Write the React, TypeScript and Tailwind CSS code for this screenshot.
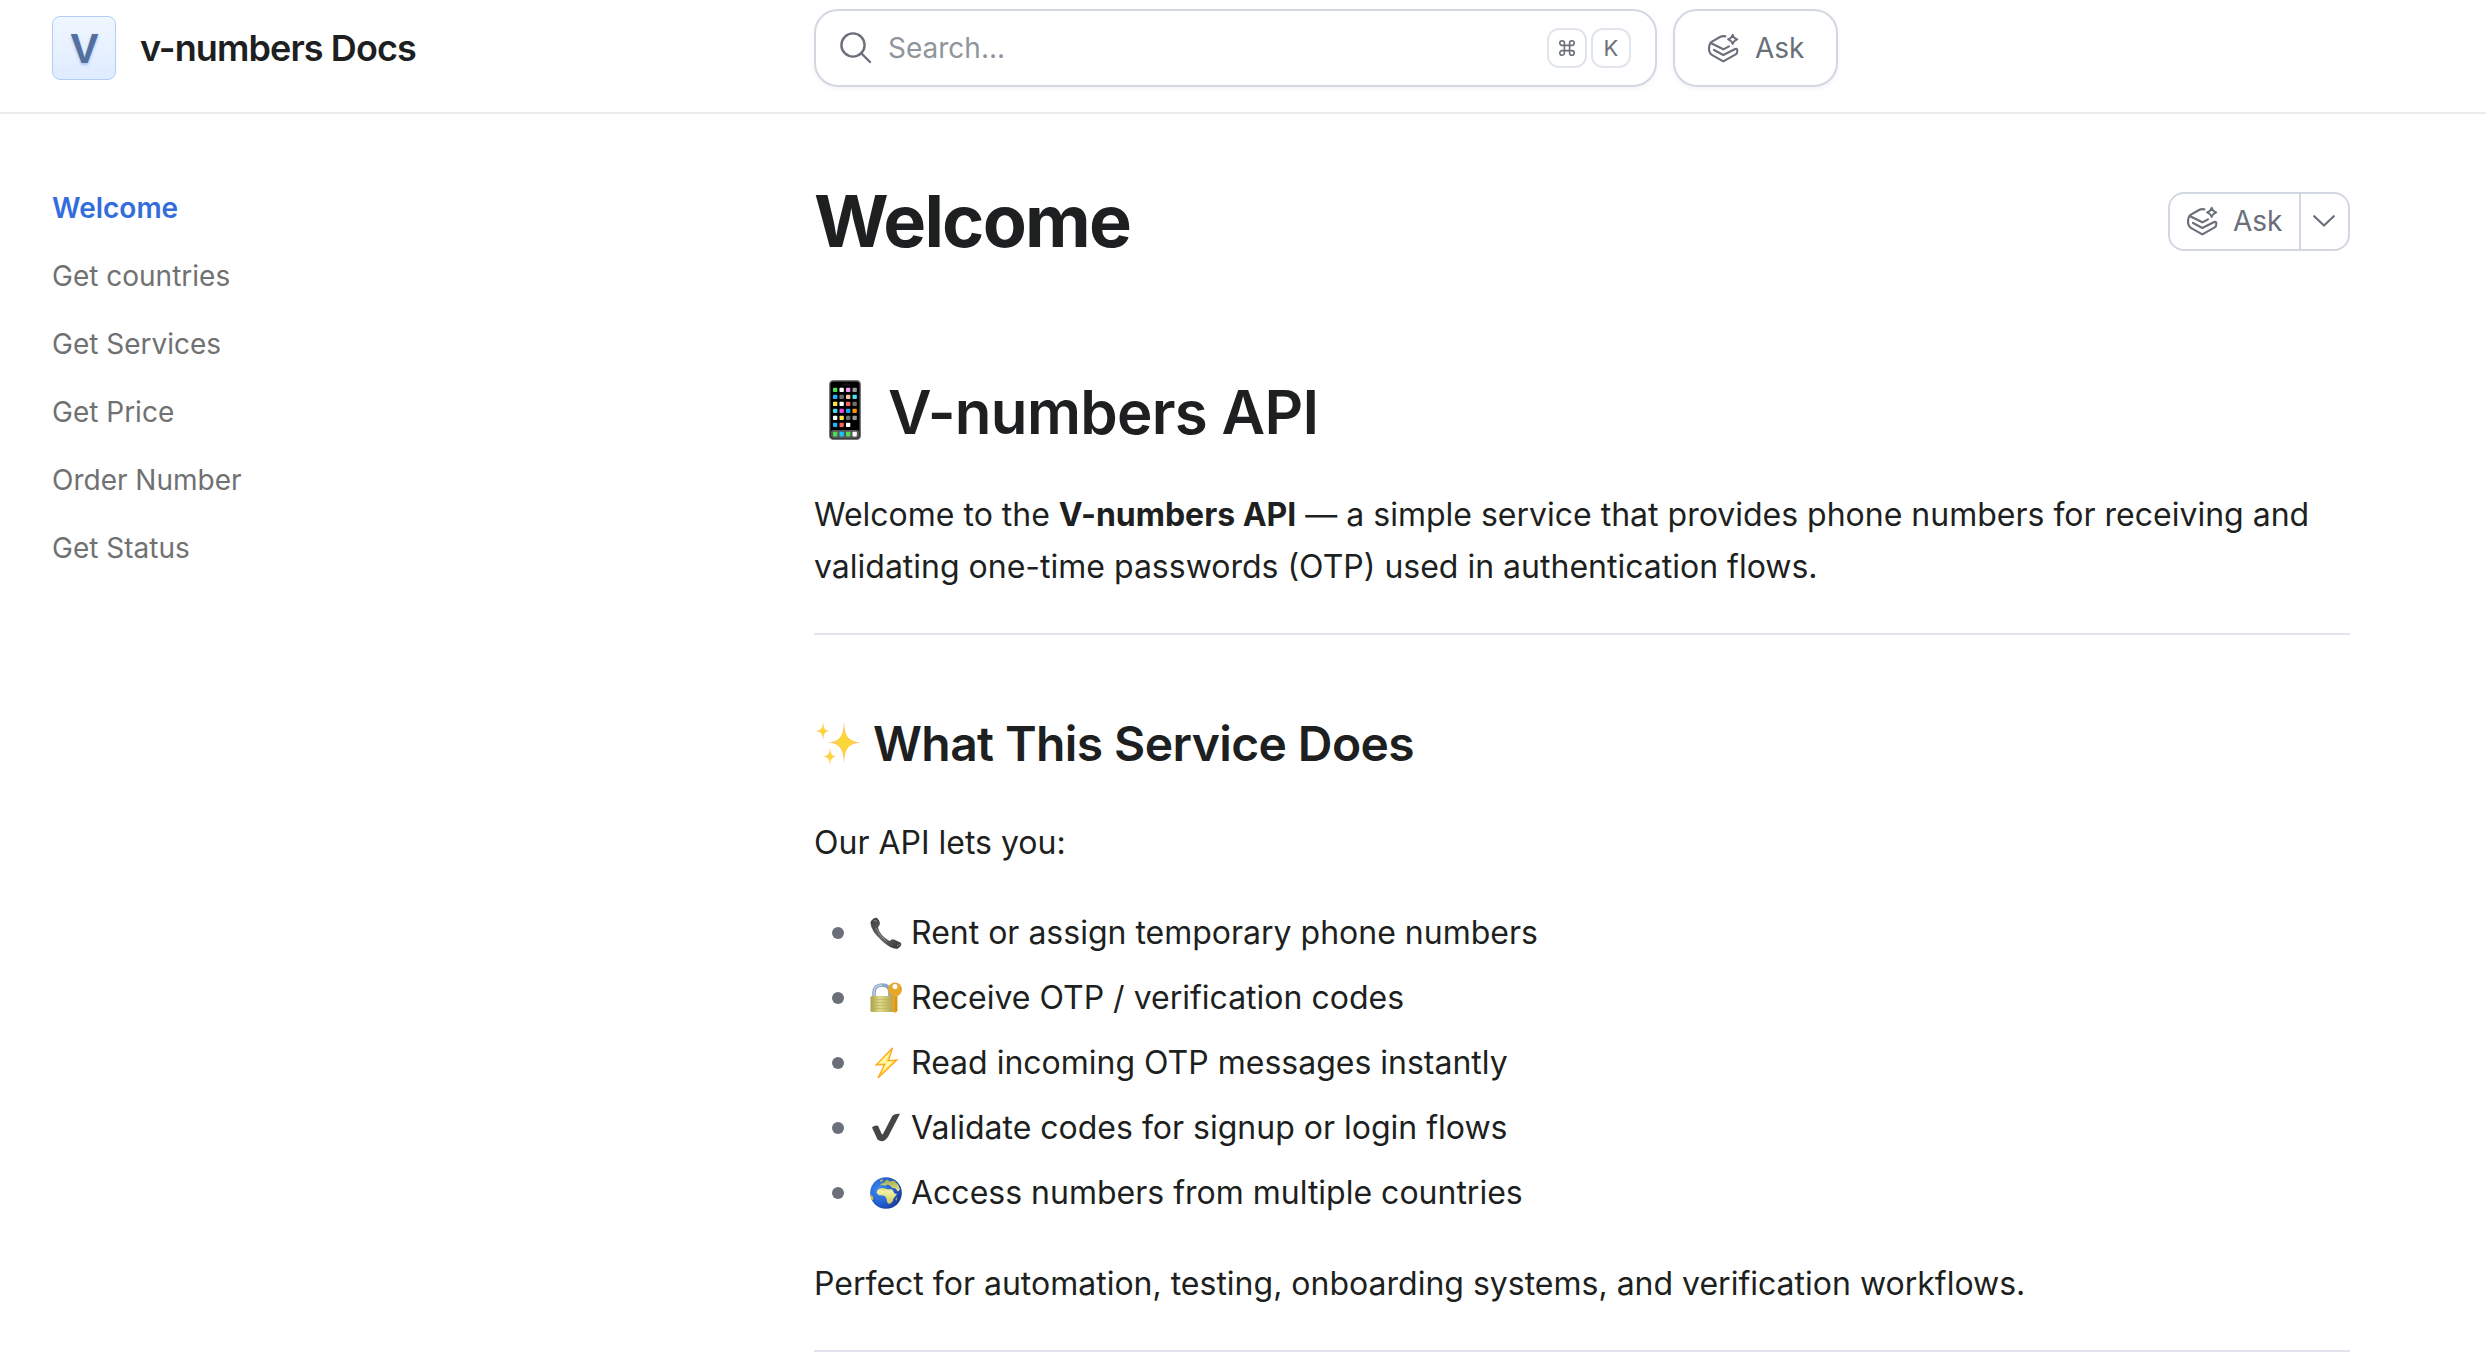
import type { ReactNode } from 'react'

const NAV_ITEMS = ['Welcome', 'Get countries', 'Get Services', 'Get Price', 'Order Number', 'Get Status']

type Feature = {
  icon: ReactNode
  text: string
}

function AskIcon() {
  return (
    <svg viewBox="0 0 90 84" className="w-[30px] h-7 shrink-0 overflow-visible" fill="none" stroke="currentColor" strokeWidth="6.5" strokeLinecap="round" strokeLinejoin="round">
      <path d="M52 7 Q43 5 36 9 L12 23 Q3 29 3 44 Q3 58 14 64 L46 82 L83 61 Q88 58 88 50 Q88 42 80 46 L46 63 L18 48" />
      <path d="M8 27 L46 46 L63 37" />
      <path d="M74 2 Q77 13 88 16 Q77 19 74 30 Q71 19 60 16 Q71 13 74 2Z" strokeWidth="5.5" />
    </svg>
  )
}

function SearchIcon() {
  return (
    <svg viewBox="0 0 32 32" className="w-8 h-8 shrink-0" fill="none" stroke="currentColor" strokeWidth="2.4" strokeLinecap="round">
      <circle cx="13" cy="13" r="11.6" />
      <path d="M21.5 21.5 L30 30" />
    </svg>
  )
}

function CommandIcon() {
  return (
    <svg viewBox="0 0 16 16" className="w-4 h-4" fill="none" stroke="currentColor" strokeWidth="1.6">
      <path d="M5.4 5.4H3.1A2.3 2.3 0 1 1 5.4 3.1V12.9A2.3 2.3 0 1 1 3.1 10.6H12.9A2.3 2.3 0 1 1 10.6 12.9V3.1A2.3 2.3 0 1 1 12.9 5.4Z" />
    </svg>
  )
}

const APP_COLORS = [
  ['#4be04f', '#ffffff', '#f09cf5', '#9a9a9a'],
  ['#1fb3ff', '#6e6e6e', '#f0caa0', '#4fdcf5'],
  ['#ffe94a', '#ffffff', '#ff6259', '#6e6e6e'],
  ['#43dfe5', '#e94de6', '#1fa6f5', '#ff9500'],
  ['#ffffff', '#ffe94a', '#6e6e6e', '#9a9a9a'],
  ['#1fb3ff', '#ff6259', '#ffffff'],
]

function PhoneEmoji() {
  return (
    <svg viewBox="0 0 32 60" className="w-8 h-[60px] shrink-0">
      <rect x=".7" y=".7" width="30.6" height="58.6" rx="3.6" fill="#000" stroke="#777" strokeWidth="1.4" />
      <rect x="13" y="3.5" width="8" height="2" rx="1" fill="#161616" />
      {APP_COLORS.map((row, r) =>
        row.map((color, c) => <rect key={`${r}-${c}`} x={4 + c * 6.5} y={7.7 + r * 7} width="4.3" height="4.4" rx=".8" fill={color} />)
      )}
      <rect x="2" y="50" width="28" height="8" rx="2" fill="#585858" />
      {['#4be04f', '#19c6ff', '#4be04f', '#ffffff'].map((color, c) => (
        <rect key={c} x={4 + c * 6.5} y="51.8" width="4.3" height="4.6" rx=".8" fill={color} />
      ))}
    </svg>
  )
}

function SparklesEmoji() {
  return (
    <svg viewBox="0 0 46 46" className="w-[46px] h-[46px] shrink-0">
      <defs>
        <radialGradient id="spark">
          <stop offset="0" stopColor="#f5da2c" />
          <stop offset=".45" stopColor="#ffd24a" />
          <stop offset="1" stopColor="#ffb577" />
        </radialGradient>
      </defs>
      <g fill="url(#spark)">
        <path d="M28 0 C28.800 14 31 20 45 21.500 C31 23 28.800 29 28 43 C27.200 29 25 23 12 21.500 C25 20 27.200 14 28 0Z" />
        <path d="M7 0 C7.500 7 8.500 9 13 10 C8.500 11 7.500 13 7 20 C6.500 13 5.500 11 0 10 C5.500 9 6.500 7 7 0Z" />
        <path d="M14 26 C14.500 32.500 15.500 34.500 20 35.500 C15.500 36.500 14.500 38.500 14 45 C13.500 38.500 12.500 36.500 7.500 35.500 C12.500 34.500 13.500 32.500 14 26Z" />
      </g>
    </svg>
  )
}

function ReceiverEmoji() {
  return (
    <svg viewBox="0 0 32 32" className="w-8 h-8">
      <defs>
        <linearGradient id="receiver" x1="0" y1="0" x2="1" y2="1">
          <stop offset="0" stopColor="#3c3d3f" />
          <stop offset=".5" stopColor="#66686a" />
          <stop offset="1" stopColor="#303133" />
        </linearGradient>
      </defs>
      <path d="M1 4 Q4 0 7 .8 Q11 5 9.500 8 L8 10.500 Q9.500 18 19.500 24 Q22 21.500 24 22.500 L30.500 25.500 Q33 28 28 31.500 Q22 33 12 24 Q1 14 .5 6Z" fill="url(#receiver)" />
      <path d="M3.500 4 Q6 2 7 5 M27 29 Q30 28 30 26.500 M6 11 Q9 19 17 25" fill="none" stroke="#8b8d8f" strokeWidth="1" />
    </svg>
  )
}

function LockEmoji() {
  return (
    <svg viewBox="0 0 32 32" className="w-8 h-8">
      <defs>
        <linearGradient id="lock">
          <stop offset="0" stopColor="#a8a045" />
          <stop offset=".35" stopColor="#e0d98c" />
          <stop offset="1" stopColor="#a3963b" />
        </linearGradient>
      </defs>
      <path d="M4 15 V11 Q4 3 12 3 Q20 3 20 11 V15" fill="none" stroke="#8ba5c5" strokeWidth="3.600" />
      <path d="M4 15 V11 Q4 3 12 3" fill="none" stroke="#c0d0e3" strokeWidth="1.400" />
      <rect x=".5" y="14" width="26.500" height="16" rx="1.500" fill="url(#lock)" />
      <path d="M1 17.500H27M1 20.500H27M1 23.500H27M1 26.500H27" stroke="#b8ae58" strokeWidth=".6" />
      <path d="M22.500 13 H27.500 V29 L25 31 L22.500 29 V26 L21 25 L22.500 23.500 L21 22 L22.500 20Z" fill="#e6a326" />
      <path d="M26 15V29" stroke="#bc7912" strokeWidth=".8" />
      <circle cx="25" cy="7.500" r="7" fill="#e6a82c" />
      <circle cx="25" cy="4.400" r="2.500" fill="#fff" />
    </svg>
  )
}

function BoltEmoji() {
  return (
    <svg viewBox="0 0 32 32" className="w-8 h-8">
      <path d="M22.500 .8 L6 18 L14.500 17.500 L8 31 L27 13 L18.500 13.500Z" fill="#ffe34d" stroke="#ffa51f" strokeWidth="1.200" />
      <path d="M20 5.500 L9 16.500 L17 15.800 L12 25 L23 14.500 L15.500 15Z" fill="#fffab8" />
    </svg>
  )
}

function CheckEmoji() {
  return (
    <svg viewBox="0 0 32 32" className="w-8 h-8">
      <path d="M2 15.500 Q4.500 12.800 8 13.800 L12 22.500 Q13 22.500 14 20 L22 4.500 Q24 1.200 30 1.800 L18 25 Q13 32 7.500 27.500Z" fill="#464646" />
    </svg>
  )
}

function GlobeEmoji() {
  return (
    <svg viewBox="0 0 32 32" className="w-8 h-8">
      <defs>
        <radialGradient id="ocean" cx=".3" cy=".4" r=".72">
          <stop offset="0" stopColor="#3f8cf0" />
          <stop offset=".6" stopColor="#2460d0" />
          <stop offset="1" stopColor="#1a3a96" />
        </radialGradient>
        <linearGradient id="land" x1="0" y1="0" x2="0" y2="32" gradientUnits="userSpaceOnUse">
          <stop offset="0" stopColor="#8fa04a" />
          <stop offset=".3" stopColor="#c9cc6a" />
          <stop offset=".45" stopColor="#f2f0a8" />
          <stop offset=".65" stopColor="#dfe07c" />
          <stop offset="1" stopColor="#cfa650" />
        </linearGradient>
      </defs>
      <circle cx="16" cy="16" r="15.800" fill="url(#ocean)" />
      <g fill="url(#land)">
        <path d="M7.500 13 Q9 10.800 13 11 L18 12.200 L22 12.200 L24.500 16.500 L27 17 L23.500 21.500 Q22.500 26 19 27 Q16.800 26 16.500 22 Q16 19 13 18.500 L8.500 18 L6.500 15.500Z" />
        <path d="M10 8.500 L11.500 6.500 L14 6 L15.500 3.500 L18 2.500 L19 4.500 L24 3.500 L28.500 8 L30 12.500 L28 14.500 L25.500 11.500 L22 10.800 L20 8.500 L17.500 7.500 L15 8.800 L12 8Z" />
        <path d="M10 3 L13 2 L13 4 L10 5Z" />
      </g>
      <path d="M1 18 Q4 19 3 23 L1.500 23 Q0 20 1 18Z" fill="#e4b33a" />
      <path d="M25.500 22 L27 20 L26.500 24Z" fill="#d9b450" />
    </svg>
  )
}

const FEATURES: Feature[] = [
  { icon: <ReceiverEmoji />, text: 'Rent or assign temporary phone numbers' },
  { icon: <LockEmoji />, text: 'Receive OTP / verification codes' },
  { icon: <BoltEmoji />, text: 'Read incoming OTP messages instantly' },
  { icon: <CheckEmoji />, text: 'Validate codes for signup or login flows' },
  { icon: <GlobeEmoji />, text: 'Access numbers from multiple countries' },
]

function Header() {
  return (
    <header className="flex h-[114px] border-b-2 border-[#ececec]">
      <div className="flex w-[814px] h-24 items-center pl-[52px]">
        <svg viewBox="0 0 64 64" className="w-16 h-16">
          <defs>
            <linearGradient id="logo" x1="0" y1="0" x2="0" y2="1">
              <stop offset="0" stopColor="#eff6ff" />
              <stop offset="1" stopColor="#dfecff" />
            </linearGradient>
          </defs>
          <rect x=".5" y=".5" width="63" height="63" rx="7.500" fill="url(#logo)" stroke="#b4cdf4" />
          <text x="32.500" y="47" textAnchor="middle" fontSize="42" className="font-['Liberation_Sans'] font-bold fill-[#546f9c] [text-shadow:0_2px_3px_#a9c4f5]">V</text>
        </svg>
        <span className="ml-6 text-[36px] leading-[48px] font-semibold tracking-[-0.9px]">v-numbers Docs</span>
      </div>
      <div className="flex gap-4 pt-[9px] text-[#6a6f79] text-[28px]">
        <div className="flex w-[843px] h-[78px] items-center rounded-[24px] border-2 border-[#d3d7e2] pl-6 pr-6 shadow-[0_2px_4px_#d3d7e244]">
          <SearchIcon />
          <span className="ml-4 grow text-[#90959c]">Search...</span>
          <div className="flex gap-1">
            <kbd className="flex w-10 h-10 items-center justify-center rounded-xl border-2 border-[#e1e5ec]"><CommandIcon /></kbd>
            <kbd className="flex w-10 h-10 items-center justify-center rounded-xl border-2 border-[#e1e5ec] font-[Inter] text-[22px]">K</kbd>
          </div>
        </div>
        <button className="flex w-[165px] h-[78px] items-center rounded-[24px] border-2 border-[#d3d7e2] pl-[33px] shadow-[0_2px_4px_#d3d7e244]">
          <AskIcon />
          <span className="ml-[17px]">Ask</span>
        </button>
      </div>
    </header>
  )
}

function Sidebar() {
  return (
    <nav className="w-[814px] shrink-0 pt-[60px] pl-[52px] text-[28px] leading-[68px] text-[#707172]">
      {NAV_ITEMS.map((item, i) => (
        <a key={item} className={i === 0 ? 'block font-semibold text-[#346ddb]' : 'block'}>{item}</a>
      ))}
    </nav>
  )
}

export default function App() {
  return (
    <div className="h-[1366px] w-[2486px] overflow-hidden bg-white font-[Inter,sans-serif] text-[#1d1f20]">
      <Header />
      <div className="flex">
        <Sidebar />
        <main className="w-[1536px] pt-[62px] text-[32px] leading-[52px]">
          <div className="flex h-[90px] items-center justify-between">
            <h1 className="text-[72px] leading-[90px] font-bold tracking-[-1.8px]">Welcome</h1>
            <div className="flex w-[182px] h-[59px] rounded-2xl border-2 border-[#d3d7e2] text-[28px] text-[#6a6f79]">
              <div className="flex w-[129px] items-center pl-[17px]">
                <AskIcon />
                <span className="ml-4">Ask</span>
              </div>
              <div className="flex grow items-center justify-center border-l-2 border-[#d3d7e2] pr-[2px]">
                <svg viewBox="0 0 22 12" className="w-[22px] h-3" fill="none" stroke="currentColor" strokeWidth="2.200" strokeLinecap="round" strokeLinejoin="round">
                  <path d="M1.200 1.200 L11 10.500 L20.800 1.200" />
                </svg>
              </div>
            </div>
          </div>

          <h2 className="mt-[108px] flex h-[76px] items-center pl-[15px] text-[60px] font-semibold tracking-[-0.7px]">
            <span className="pb-1"><PhoneEmoji /></span>
            <span className="ml-[27px]">V-numbers API</span>
          </h2>
          <p className="mt-[39px]">
            Welcome to the <strong className="font-bold">V-numbers API</strong> — a simple service that provides phone numbers for receiving and<br />
            validating one-time passwords (OTP) used in authentication flows.
          </p>
          <hr className="mt-10 border-t-2 border-[#e1e4ec]" />

          <h3 className="mt-[78px] flex h-[62px] items-center pl-[2px] text-[48px] font-semibold tracking-[-0.6px]">
            <SparklesEmoji />
            <span className="ml-[11px]">What This Service Does</span>
          </h3>
          <p className="mt-[42px]">Our API lets you:</p>
          <ul className="mt-[38px] flex flex-col gap-[13px]">
            {FEATURES.map(f => (
              <li key={f.text} className="flex items-center pl-[18px]">
                <span className="w-3 h-3 rounded-full bg-[#6a6f79]" />
                <span className="ml-[26px]">{f.icon}</span>
                <span className="ml-[9px]">{f.text}</span>
              </li>
            ))}
          </ul>
          <p className="mt-[39px]">Perfect for automation, testing, onboarding systems, and verification workflows.</p>
          <hr className="mt-10 border-t-2 border-[#e1e4ec]" />
        </main>
      </div>
    </div>
  )
}
